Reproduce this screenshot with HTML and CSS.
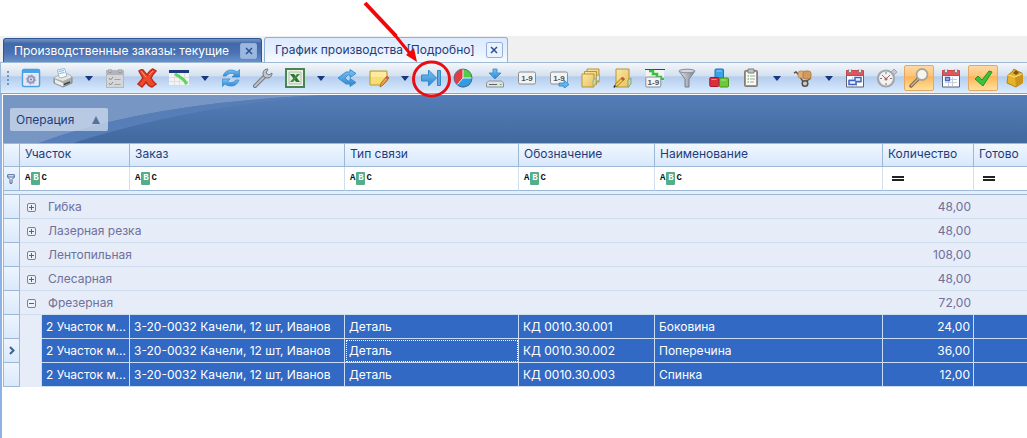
FILE: index.html
```html
<!DOCTYPE html>
<html lang="ru">
<head>
<meta charset="utf-8">
<title>График производства</title>
<link rel="stylesheet" href="styles.css">
</head>
<body>
<svg class="defs" aria-hidden="true">
  <defs>
    <linearGradient id="gBlue" x1="0" y1="0" x2="0" y2="1"><stop offset="0" stop-color="#7cc4f4"/><stop offset="1" stop-color="#2b84d0"/></linearGradient>
    <linearGradient id="gSteel" x1="0" y1="0" x2="1" y2="0"><stop offset="0" stop-color="#e4e6ec"/><stop offset="1" stop-color="#7d8290"/></linearGradient>
    <linearGradient id="gFolder" x1="0" y1="0" x2="1" y2="1"><stop offset="0" stop-color="#fbe9a4"/><stop offset="1" stop-color="#e6c160"/></linearGradient>
    <symbol id="i-drop" viewBox="0 0 8 5"><path d="M0 0h8L4 5z" fill="#17387c"/></symbol>
    <symbol id="i-close" viewBox="0 0 8 8"><path d="M1 1l6 6M7 1L1 7" stroke="currentColor" stroke-width="1.5"/></symbol>
    <symbol id="i-calendar" viewBox="0 0 20 20"><path d="M1.500 6h17v13h-17z" fill="#fbfcff" stroke="#5a6276"/><path d="M1.500 2.500h17v5h-17z" fill="#e5535a" stroke="#c8474e"/><path d="M5 1v4M15 1v4" stroke="#888" stroke-width="3"/><path d="M5 1v3M15 1v3" stroke="#fff" stroke-width="1.500"/><path d="M4 11.500h12M4 14.500h12M7.500 9v9M11.500 9v9" stroke="#c4cedb"/></symbol>
    <symbol id="i-digits" viewBox="0 0 20 20"><rect x="1.500" y="4" width="17" height="12" rx="1.500" fill="#f2f3f3" stroke="#8a8e96"/><text x="10" y="13" class="digits">1-9</text></symbol>
  </defs>
</svg>

<main class="app">
  <header class="tabs" role="tablist">
    <div class="tab">
      <button class="tab-title" role="tab" aria-selected="false">Производственные заказы: текущие</button>
      <button class="tab-close" aria-label="Закрыть"><svg><use href="#i-close"/></svg></button>
    </div>
    <div class="tab tab-active">
      <button class="tab-title" role="tab" aria-selected="true">График производства [Подробно]</button>
      <button class="tab-close" aria-label="Закрыть"><svg><use href="#i-close"/></svg></button>
    </div>
  </header>

  <nav class="toolbar" aria-label="Панель инструментов">
    <span class="grip"></span>
    <button class="tool" aria-label="Настройка вида"><svg viewBox="0 0 20 20"><rect x="1.500" y="1.500" width="17" height="17" rx="1.500" fill="#edf3fb" stroke="#4da0e0" stroke-width="1.500"/><path d="M2 2h16v3H2z" fill="#4aa5e8"/><path d="M3 6h14v11H3z" fill="#e6e9f3"/><circle cx="10" cy="11.500" r="3.300" fill="#dcdcee" stroke="#9297bb" stroke-width="2"/><circle cx="10" cy="11.500" r="4.800" fill="none" stroke="#9a9fc1" stroke-width="1" stroke-dasharray="1.500 2.200"/><circle cx="10" cy="11.500" r="1" fill="#777ca4"/></svg></button>
    <button class="tool" aria-label="Печать"><svg viewBox="0 0 20 20"><path d="M1 10l5-3 9-1 4 3v6l-9 4-9-4z" fill="#a9aeac" stroke="#727876" stroke-width=".8"/><path d="M1 10l5-3 9-1 4 3-9 4z" fill="#e4e6e5"/><path d="M6 9L4.500 2l7-1.500L14 8l-6 2z" fill="#f6fbff" stroke="#91a4b5" stroke-width=".8"/><path d="M6 3.500l5-1M6.500 5.500l5-1" stroke="#7db4e4"/><path d="M2 11.500l8 3.500v3.500l-8-3.500z" fill="#eceeed"/><path d="M11 16.500l6-2.500" stroke="#3c4443" stroke-width="1.500" fill="none"/></svg></button>
    <button class="drop" aria-label="Варианты печати"><svg><use href="#i-drop"/></svg></button>
    <button class="tool" aria-label="План" disabled><svg viewBox="0 0 20 20"><rect x="1.500" y="2.500" width="17" height="17" fill="#d3d5d7" stroke="#b4b7bb"/><path d="M2 3h16v4H2z" fill="#b1b4b8"/><path d="M5 1v4M15 1v4" stroke="#999" stroke-width="3"/><path d="M5 1v3M15 1v3" stroke="#ddd"/><path d="M4 10l1.500 2L8 9M4 15l1.500 2L8 14" stroke="#888" fill="none"/><path d="M9.500 11.500h6M9.500 16.500h6" stroke="#a3a3a3"/></svg></button>
    <button class="tool" aria-label="Удалить"><svg viewBox="0 0 20 20"><path d="M2 3q2-2 4-1l4 5q3-5 6-6l3 2q-3 3-5 7 2 4 5 6l-4 3q-4-1-6-5-2 3-4 5l-4-3q3-3 5-6-2-3-4-7z" fill="#ed4a2c" stroke="#c02c18" stroke-width="1.500"/><path d="M4 3l5 6M12 7l4-4" stroke="#ff9d82"/></svg></button>
    <button class="tool" aria-label="Диаграмма"><svg viewBox="0 0 20 20"><path d="M0 3h20v14H0z" fill="#f3f3f3"/><path d="M0 9.500h20M0 13.500h20M5.500 5v12M10.500 5v12M15.500 5v12" stroke="#dedede"/><path d="M0 2h20v3H0z" fill="#1d3a7c"/><path d="M6 6l5 3 4 3 3 4" stroke="#5bd461" stroke-width="3" fill="none"/></svg></button>
    <button class="drop" aria-label="Варианты диаграммы"><svg><use href="#i-drop"/></svg></button>
    <button class="tool" aria-label="Обновить"><svg viewBox="0 0 20 20"><path d="M2 8Q4 2 10 2q4 0 6 2l2.500-2.500V9H11l2.500-2.500Q9 3.500 5 8z" fill="url(#gBlue)" stroke="#3c8bcb" stroke-width=".8"/><path d="M18 12q-2 6-8 6-4 0-6-2l-2.500 2.500V11H9l-2.500 2.500Q11 16.500 15 12z" fill="url(#gBlue)" stroke="#3c8bcb" stroke-width=".8"/></svg></button>
    <button class="tool" aria-label="Сервис"><svg viewBox="0 0 20 20"><path d="M2 18L12 8" stroke="#757a82" stroke-width="4" stroke-linecap="round"/><path d="M2 18L12 8" stroke="#bcc0c6" stroke-width="2" stroke-linecap="round"/><path d="M15 1q-5 0-5 5 0 4 4 4 5 0 5-5l-3 2-3-2z" fill="#c3c7cd" stroke="#757a82"/></svg></button>
    <button class="tool" aria-label="Экспорт в Excel"><svg viewBox="0 0 20 20"><path d="M1 1h18v18H1z" fill="#edf3e9" stroke="#4b8450" stroke-width="2"/><path d="M4 4h12v12H4z" fill="#e3ecdf" stroke="#a9c4a6"/><path d="M5 6h4l6 8h-4z" fill="#2d7237"/><path d="M12 6h3l-7 8H5z" fill="#3f8845"/></svg></button>
    <button class="drop" aria-label="Варианты экспорта"><svg><use href="#i-drop"/></svg></button>
    <button class="tool" aria-label="Разделить"><svg viewBox="0 0 20 20"><path d="M1 10l8-6h4V1.500l6 4-6 4V7h-2l-3 3 3 3h2v-2.500l6 4-6 4V16H9z" fill="url(#gBlue)" stroke="#3a8fd2"/></svg></button>
    <button class="tool" aria-label="Заметка"><svg viewBox="0 0 20 20"><path d="M1 3h17v10l-4 4H1z" fill="#f7dd72" stroke="#b89a3b"/><path d="M2 4h15v5H2z" fill="#fdec9d"/><path d="M11 19l1-4 6-7 2 2-6 7z" fill="#f1a044" stroke="#9d6423" stroke-width=".8"/><path d="M17 9l2 2" stroke="#dc5757" stroke-width="2"/></svg></button>
    <button class="drop" aria-label="Варианты заметки"><svg><use href="#i-drop"/></svg></button>
    <button class="tool" aria-label="Сдвинуть вправо"><svg viewBox="0 0 20 20"><path d="M.5 7h7V2l8 8-8 8v-5h-7z" fill="url(#gBlue)" stroke="#348acb"/><path d="M16.500 2.500h3v15h-3z" fill="#5ba9e1" stroke="#3686c7"/></svg></button>
    <button class="tool" aria-label="Отчёт"><svg viewBox="0 0 20 20"><circle cx="10" cy="10" r="9" fill="#e33b42"/><path d="M10 10V1a9 9 0 0 1 9 9z" fill="#54ca4b"/><path d="M10 10h9A9 9 0 0 1 4 17z" fill="#2f9ce3"/><path d="M10 1v9h9M10 10l-6 7" stroke="#e8f2ef" fill="none"/><circle cx="10" cy="10" r="9" fill="none" stroke="#44617d" stroke-width=".8"/></svg></button>
    <button class="tool" aria-label="Загрузить"><svg viewBox="0 0 20 20"><path d="M3.500 13h13l2 2v4h-17v-4z" fill="#dfe2e5" stroke="#8d9299"/><path d="M4 16.500h8" stroke="#5e6369"/><path d="M15 16.500h1.500" stroke="#3bb14d"/><path d="M8 1h4v4h4l-6 6-6-6h4z" fill="url(#gBlue)" stroke="#3387c8" stroke-width=".8"/></svg></button>
    <button class="tool" aria-label="Нумерация"><svg><use href="#i-digits"/></svg></button>
    <button class="tool" aria-label="Перенумеровать"><svg viewBox="0 0 20 20"><use href="#i-digits"/><path d="M10 15h5v-3l5 4.500-5 4V18h-5z" fill="#5fb6ef" stroke="#2d82c6" stroke-width=".8"/></svg></button>
    <button class="tool" aria-label="Папки"><svg viewBox="0 0 20 20"><path d="M6 1h12v13H6z" fill="url(#gFolder)" stroke="#b8933f"/><path d="M3.500 3.500h12v13h-12z" fill="url(#gFolder)" stroke="#b8933f"/><path d="M1 6h12v13H1z" fill="url(#gFolder)" stroke="#b8933f"/><path d="M12 18v-6l3-2v6z" fill="#c4dca9" stroke="#9aa77a" stroke-width=".8"/><path d="M15.500 13.500v-5l3-2v5z" fill="#dceadf" stroke="#9aa77a" stroke-width=".8"/></svg></button>
    <button class="tool" aria-label="Изменить папку"><svg viewBox="0 0 20 20"><path d="M3 1h13v18H3z" fill="url(#gFolder)" stroke="#b8933f"/><path d="M15 12l3-2v6l-3 3z" fill="#c4dca9" stroke="#8fa275"/><path d="M1.500 19l1-3 7-7 2 2-7 7z" fill="#f3ce45" stroke="#7f682a" stroke-width=".8"/><path d="M8.500 10l2.500 2" stroke="#dc4b4b" stroke-width="2.500"/><path d="M1 19.500l1-2" stroke="#222" stroke-width="1.500"/></svg></button>
    <button class="tool" aria-label="Номера на графике"><svg viewBox="0 0 20 20"><path d="M1 1h18v12H1z" fill="#f2f6f2"/><path d="M0 1h20v1H0z" fill="#244582"/><path d="M4 3h4v3h4v3h4v2h3" stroke="#35c13b" stroke-width="2.500" fill="none"/><rect x=".8" y="9" width="15" height="10" rx="1" fill="#f2f3f3" stroke="#8a8e96"/><text x="8.300" y="17" class="digits">1-9</text></svg></button>
    <button class="tool" aria-label="Фильтр"><svg viewBox="0 0 20 20"><path d="M2 3l6 8v8h4v-8l6-8z" fill="url(#gSteel)" stroke="#7b7e8c"/><ellipse cx="10" cy="3" rx="8" ry="1.800" fill="#d3d5df" stroke="#8a8c99"/></svg></button>
    <button class="tool" aria-label="Компоненты"><svg viewBox="0 0 20 20"><rect x="6" y="1" width="8.500" height="9" rx="1" fill="#38a4e8" stroke="#1d76b8"/><rect x=".8" y="9.500" width="9" height="9" rx="1" fill="#dd2e3c" stroke="#a61926"/><rect x="10.500" y="10" width="9" height="9" rx="1" fill="#6cc93b" stroke="#469422"/><path d="M7.500 3h5M2.500 11.500h5M12 12h5" stroke="#fff" opacity=".5"/></svg></button>
    <button class="tool" aria-label="Буфер"><svg viewBox="0 0 20 20"><rect x="3.500" y="2.500" width="13" height="16" rx="1" fill="#a09288" stroke="#8a7d74"/><path d="M5 4h10v13H5z" fill="#f8faf8"/><path d="M7 1h6v4H7z" fill="#c2c2c0" stroke="#80807f"/><path d="M9 8h5M9 11h5M9 14h4" stroke="#a0a8a3"/><path d="M6.500 8h1.500M6.500 11h1.500M6.500 14h1.500" stroke="#409e4c"/></svg></button>
    <button class="drop" aria-label="Варианты буфера"><svg><use href="#i-drop"/></svg></button>
    <button class="tool" aria-label="Перемещение"><svg viewBox="0 0 20 20"><path d="M1 5l2-1 2 2 6 9 7-5" fill="none" stroke="#5a5451" stroke-width="1.500"/><rect x="5" y="3" width="7" height="7" rx="2.500" fill="#e0ac74" stroke="#b5824c" stroke-width=".8"/><rect x="10" y="3" width="8" height="8" rx="2.500" fill="#d4995c" stroke="#a8743e" stroke-width=".8"/><circle cx="12" cy="15.500" r="2.800" fill="#ccc" stroke="#55504d" stroke-width="1.500"/></svg></button>
    <button class="drop" aria-label="Варианты перемещения"><svg><use href="#i-drop"/></svg></button>
    <button class="tool" aria-label="Календарный график"><svg viewBox="0 0 20 20"><use href="#i-calendar"/><path d="M4 16.500v-4h6v-3h6v4h-5v3z" fill="#e8efff" stroke="#3f63c4" stroke-width="1.500"/></svg></button>
    <button class="tool" aria-label="Время"><svg viewBox="0 0 20 20"><path d="M14 4l3-3 3 3-3 3z" fill="#c6cad0" stroke="#a2a6ad"/><circle cx="9" cy="10.500" r="8" fill="#f2f2f2" stroke="#a4a7ac" stroke-width="2.200"/><path d="M9 4v2M9 15v2M3 10.500h2M13 10.500h2" stroke="#777"/><path d="M5 7l4 4 4-4" stroke="#777" fill="none"/><circle cx="9" cy="11" r="1.500" fill="#c25c53"/></svg></button>
    <button class="tool tool-on" aria-label="Поиск" aria-pressed="true"><svg viewBox="0 0 20 20"><path d="M2 18l7-7" stroke="#806849" stroke-width="3.500" stroke-linecap="round"/><path d="M2 18l7-7" stroke="#c4b69f" stroke-width="1.500"/><circle cx="13" cy="6.500" r="5.500" fill="#f7f5ef" stroke="#aaa59c" stroke-width="1.800"/></svg></button>
    <button class="tool" aria-label="Календарь"><svg viewBox="0 0 20 20"><use href="#i-calendar"/><path d="M4.500 9.500h4v3h-4z" fill="#aac2f4" stroke="#4266c9" stroke-width="1.300"/></svg></button>
    <button class="tool tool-on" aria-label="Готово" aria-pressed="true"><svg viewBox="0 0 20 20"><path d="M2 11l3-3 4 4 7-9 3 1-9 14z" fill="#3cc13c" stroke="#279129"/></svg></button>
    <button class="tool" aria-label="Упаковка"><svg viewBox="0 0 20 20"><path d="M3 7l4-3 2-3 3 2 5 2v10l-6 4-9-4z" fill="#e7b22b" stroke="#b58216"/><path d="M10 9l8-3v9l-7 4z" fill="#cc941c"/><path d="M3 7l7 2 7-3" fill="none" stroke="#fae077"/><path d="M8 5l3-3 3 3-3 2z" fill="#7d5915"/></svg></button>
  </nav>

  <section class="grid">
    <div class="group-panel">
      <svg class="swoosh" viewBox="0 0 500 48" preserveAspectRatio="xMinYMin slice" aria-hidden="true"><path d="M0 0h330Q150 6 36 48H0z" fill="#7796c4"/><path d="M330 0Q150 6 36 48h34Q190 10 330 0z" fill="#587eb7"/></svg>
      <button class="group-tag">Операция <svg viewBox="0 0 8 8"><path d="M4 0l4 8H0z" fill="#557399"/></svg></button>
    </div>
    <table class="data">
      <colgroup><col class="c-mark"><col class="c-indent"><col class="c-area"><col class="c-order"><col class="c-link"><col class="c-code"><col class="c-name"><col class="c-qty"><col></colgroup>
      <thead>
        <tr class="heads"><th></th><th colspan="2">Участок</th><th>Заказ</th><th>Тип связи</th><th>Обозначение</th><th>Наименование</th><th>Количество</th><th>Готово</th></tr>
        <tr class="filters">
          <td class="mark"><svg class="funnel" viewBox="0 0 8 10"><path d="M.7.7h6.600v2.500L5 5.500v3.800H3V5.500L.7 3.200zM.7 3h6.600" fill="none" stroke="#4d6a9c"/></svg></td>
          <td colspan="2"><button class="abc" aria-label="Содержит">A<b>B</b>C</button></td>
          <td><button class="abc" aria-label="Содержит">A<b>B</b>C</button></td>
          <td><button class="abc" aria-label="Содержит">A<b>B</b>C</button></td>
          <td><button class="abc" aria-label="Содержит">A<b>B</b>C</button></td>
          <td><button class="abc" aria-label="Содержит">A<b>B</b>C</button></td>
          <td><button class="equals" aria-label="Равно"></button></td>
          <td><button class="equals" aria-label="Равно"></button></td>
        </tr>
        <tr class="divider"><td colspan="9"></td></tr>
      </thead>
      <tbody>
        <tr class="group"><td class="mark"></td><td colspan="6"><button class="toggle" aria-label="Развернуть"></button>Гибка</td><td class="num">48,00</td><td></td></tr>
        <tr class="group"><td class="mark"></td><td colspan="6"><button class="toggle" aria-label="Развернуть"></button>Лазерная резка</td><td class="num">48,00</td><td></td></tr>
        <tr class="group"><td class="mark"></td><td colspan="6"><button class="toggle" aria-label="Развернуть"></button>Лентопильная</td><td class="num">108,00</td><td></td></tr>
        <tr class="group"><td class="mark"></td><td colspan="6"><button class="toggle" aria-label="Развернуть"></button>Слесарная</td><td class="num">48,00</td><td></td></tr>
        <tr class="group group-open"><td class="mark"></td><td colspan="6"><button class="toggle" aria-label="Свернуть"></button>Фрезерная</td><td class="num">72,00</td><td></td></tr>
        <tr class="item"><td class="mark"></td><td class="indent"></td><td>2 Участок м...</td><td>З-20-0032 Качели, 12 шт, Иванов</td><td>Деталь</td><td>КД 0010.30.001</td><td>Боковина</td><td class="num">24,00</td><td></td></tr>
        <tr class="item"><td class="mark"><svg class="pointer" viewBox="0 0 6 9"><path d="M1 1l3.500 3.500L1 8" fill="none" stroke="#3f5f92" stroke-width="2"/></svg></td><td class="indent"></td><td>2 Участок м...</td><td>З-20-0032 Качели, 12 шт, Иванов</td><td class="focus">Деталь</td><td>КД 0010.30.002</td><td>Поперечина</td><td class="num">36,00</td><td></td></tr>
        <tr class="item"><td class="mark"></td><td class="indent"></td><td>2 Участок м...</td><td>З-20-0032 Качели, 12 шт, Иванов</td><td>Деталь</td><td>КД 0010.30.003</td><td>Спинка</td><td class="num">12,00</td><td></td></tr>
      </tbody>
    </table>
  </section>

  <svg class="callout" viewBox="0 0 100 100" aria-hidden="true"><path d="M5 3l31 33" stroke="#f00808" stroke-width="4"/><path d="M34 34l18 22" stroke="#f00808" stroke-width="3"/><path d="M57 62L46 55l8-7z" fill="#f00808"/><ellipse cx="71.500" cy="79" rx="18" ry="17" fill="none" stroke="#e60f14" stroke-width="3"/></svg>
</main>
</body>
</html>
```
FILE: styles.css
```css
* { box-sizing: border-box; }

body {
  margin: 0;
  background: #fff;
  font: 12px/16px Inter, "DejaVu Sans", sans-serif;
  color: #1e3c7b;
}

button {
  margin: 0;
  padding: 0;
  border: 0;
  background: none;
  font: inherit;
  color: inherit;
}

.defs { position: absolute; width: 0; height: 0; }

.app {
  position: relative;
  min-height: 100vh;
  padding-top: 36px;
  display: flex;
  flex-direction: column;
  overflow: hidden;
}

.tabs {
  display: flex;
  align-items: flex-end;
  gap: 2px;
  height: 26px;
  padding-left: 3px;
  background: #f0f0f0;
}

.tab {
  display: flex;
  align-items: center;
  gap: 11px;
  height: 24px;
  padding: 0 4px 0 10px;
  border: 1px solid #2f5596;
  border-bottom: 0;
  border-radius: 3px 3px 0 0;
  background: linear-gradient(#7696c4, #4169a9 20%, #4a72b2 60%, #6a90cb);
  color: #fff;
}

.tab-active {
  height: 25px;
  border-color: #8fb0d9;
  background: linear-gradient(#dceaff, #e6f0ff 50%, #f8fbff);
  color: #1e3c7b;
}

.tab-title { white-space: nowrap; }

.tab-close {
  display: grid;
  place-items: center;
  width: 17px;
  height: 16px;
  border: 1px solid #93b0dc;
  border-radius: 2px;
  background: #9bb7df;
  color: #29508f;
}

.tab-active .tab-close { background: #eaf3ff; }
.tab-close svg { width: 8px; height: 8px; }

.toolbar {
  display: flex;
  align-items: center;
  gap: 2px;
  height: 32px;
  padding-left: 6px;
  border-top: 1px solid #9dbbd6;
  border-left: 1px solid #9dbbd6;
  border-bottom: 1px solid #83a2cc;
  background: linear-gradient(#f4f7fa, #d3e0ef 43%, #b4cdec 46%, #d3e6fd 90%, #e3f0ff);
  overflow: hidden;
}

.grip {
  flex: none;
  width: 2px;
  height: 15px;
  margin-right: 5px;
  background: repeating-linear-gradient(#6f93c5 0 2px, transparent 2px 4px);
}

.tool, .drop {
  flex: none;
  display: grid;
  place-items: center;
  height: 26px;
}

.tool { width: 30px; }
.tool svg { width: 20px; height: 20px; }
.drop { width: 18px; }
.drop svg { width: 8px; height: 5px; }

.tool-on {
  border: 1px solid #e3a868;
  border-radius: 2px;
  background: linear-gradient(#fcd9a4, #fdc67a 40%, #fbb458 45%, #fee29a);
}

.digits {
  font: bold 8px "Liberation Sans", sans-serif;
  text-anchor: middle;
  fill: #505358;
}

.grid {
  flex: 1;
  padding: 1px 0 0 1px;
  border-left: 2px solid #8db2e3;
}

.group-panel {
  position: relative;
  height: 48px;
  padding: 13px 7px;
  background: linear-gradient(#557eb8, #41699e);
  overflow: hidden;
}

.swoosh {
  position: absolute;
  left: 0;
  top: 0;
  width: 500px;
  height: 48px;
}

.group-tag {
  position: relative;
  display: flex;
  align-items: center;
  gap: 18px;
  height: 23px;
  padding: 0 8px 0 6px;
  border-radius: 2px;
  background: rgba(206, 219, 238, .75);
}

.group-tag svg { width: 8px; height: 8px; }

.data {
  width: 100%;
  table-layout: fixed;
  border-collapse: separate;
  border-spacing: 0;
  border-left: 1px solid #9db7d7;
}

.c-mark { width: 16px; }
.c-indent { width: 22px; }
.c-area { width: 88px; }
.c-order { width: 215px; }
.c-link { width: 174px; }
.c-code { width: 136px; }
.c-name { width: 228px; }
.c-qty { width: 91px; }

th, td {
  height: 24px;
  padding: 0 4px;
  font-weight: normal;
  text-align: left;
  white-space: nowrap;
  overflow: hidden;
}

.heads th {
  padding: 0 5px 2px;
  border: solid #9db7d7;
  border-width: 1px 1px 1px 0;
  background: linear-gradient(#f0f7ff, #d8e8fb);
}

.filters td {
  padding: 0 5px;
  border-right: 1px solid #d0dfee;
  border-bottom: 1px solid #9db7d7;
}

.data .mark {
  padding: 0 3px;
  border-right: 1px solid #9db7d7;
  border-bottom: 1px solid #9db7d7;
  background: linear-gradient(#edf5ff, #dae9fc);
}

.mark svg { display: block; }
.funnel { width: 8px; height: 10px; }
.pointer { width: 6px; height: 9px; margin-left: 2px; }

.divider td {
  height: 4px;
  padding: 0;
  border-bottom: 1px solid #9db7d7;
  background: #e3effd;
}

.abc {
  display: flex;
  align-items: center;
  gap: 1px;
  font: bold 9px/13px "Liberation Mono", monospace;
  color: #111;
}

.abc b {
  width: 9px;
  border-radius: 1px;
  background: #55ad89;
  color: #fff;
  text-align: center;
}

.equals {
  display: block;
  width: 12px;
  height: 5px;
  margin-left: 4px;
  border: solid #222;
  border-width: 2px 0;
}

.group td {
  border-bottom: 1px solid #cfdeee;
  background: #e6ecf8;
  color: #70709a;
}

.num, .data .num { padding-right: 3px; text-align: right; }

.toggle {
  display: inline-block;
  width: 9px;
  height: 9px;
  margin: 0 12px 0 3px;
  border: 1px solid #75829c;
  border-radius: 2px;
  background:
    linear-gradient(#52617e, #52617e) center / 5px 1px no-repeat,
    linear-gradient(#52617e, #52617e) center / 1px 5px no-repeat,
    #eef2fa;
}

.group-open .toggle {
  background: linear-gradient(#52617e, #52617e) center / 5px 1px no-repeat, #eef2fa;
}

.item td {
  border-right: 1px solid #c9ddf5;
  border-bottom: 1px solid #c9ddf5;
  background: #3169c4;
  color: #fff;
}

.item .indent { border-bottom-color: #e6ecf8; background: #e6ecf8; }

.data tr > :last-child { border-right: 0; }

.item .focus {
  outline: 1px dotted #fff;
  outline-offset: -2px;
}

/* Pointer marking the shift button */
.callout {
  position: absolute;
  left: 360px;
  top: 0;
  width: 100px;
  height: 100px;
  pointer-events: none;
}
```
